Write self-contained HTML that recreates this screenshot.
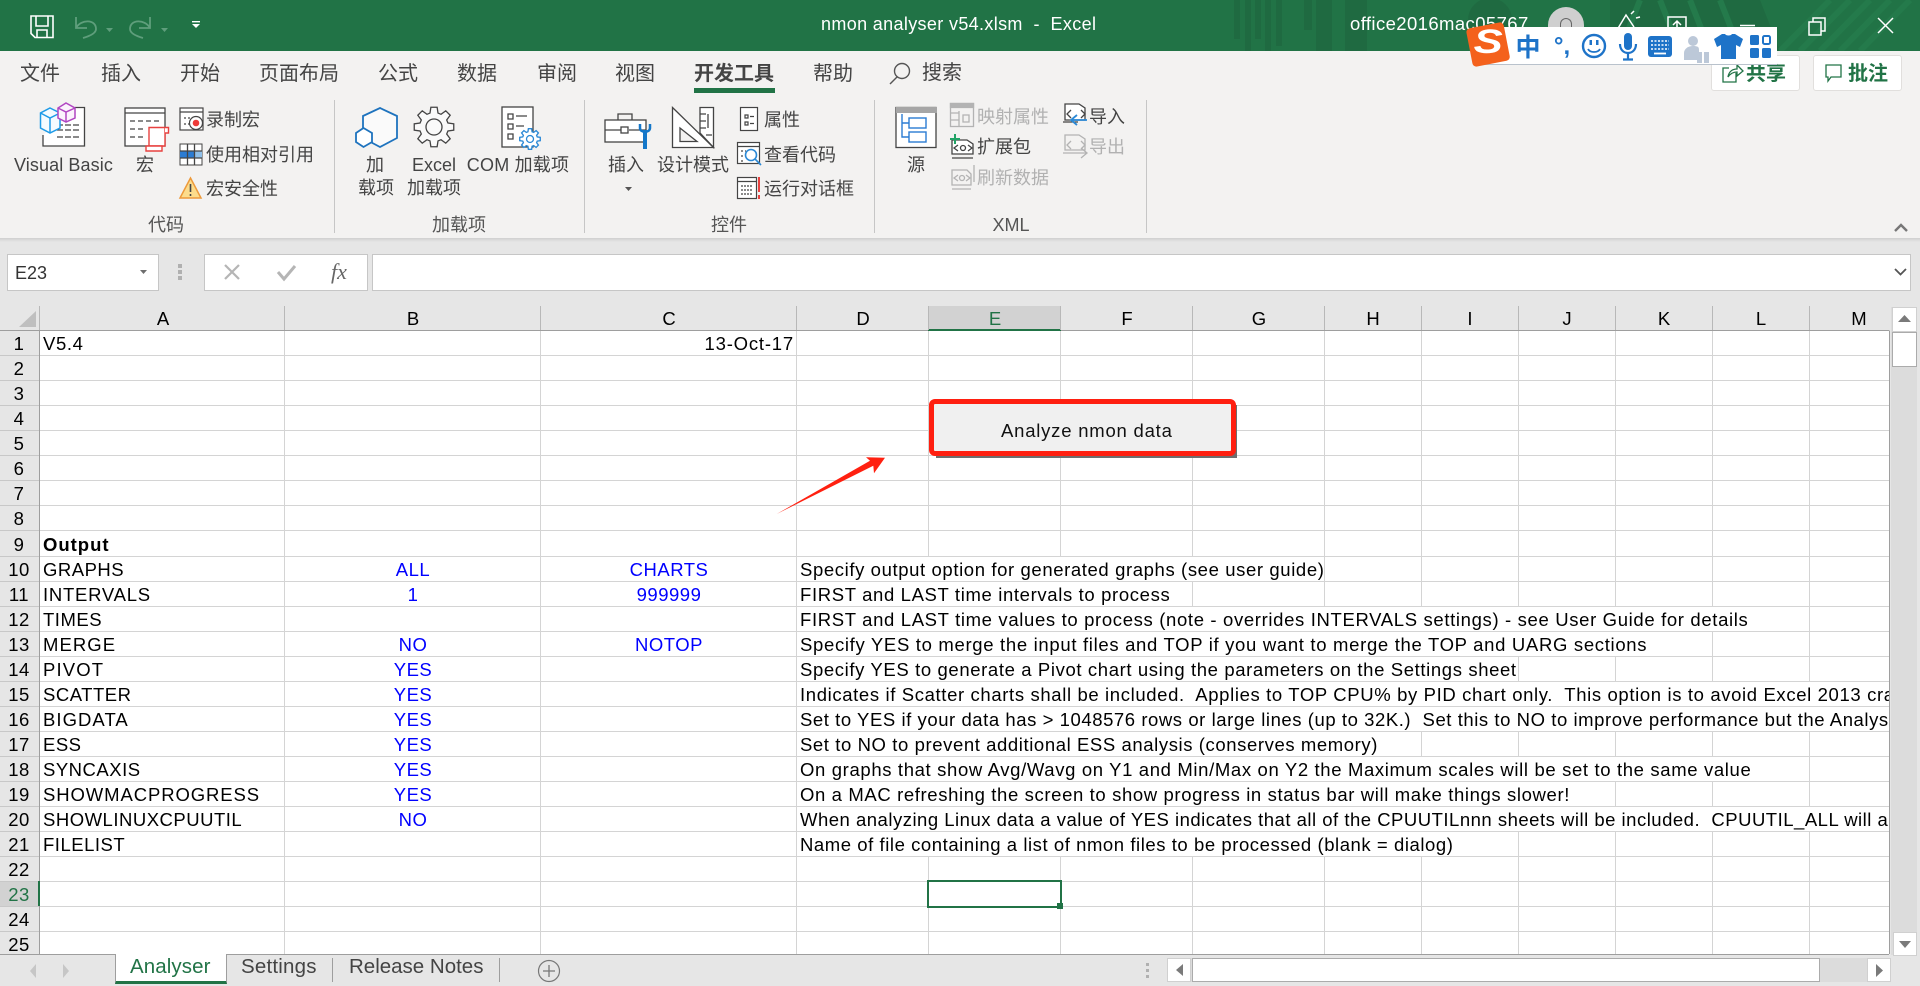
<!DOCTYPE html>
<html><head><meta charset="utf-8"><title>nmon analyser v54.xlsm - Excel</title>
<style>
html,body{margin:0;padding:0;width:1920px;height:986px;overflow:hidden;background:#e6e6e6}
body{position:relative;font-family:"Liberation Sans","Noto Sans CJK SC",sans-serif;font-size:18px;color:#444}
div{position:absolute;box-sizing:border-box}
.t{position:absolute;white-space:pre;line-height:24px}
.c{transform:translateX(-50%)}
.g{color:#b1b1b1}
.tab{font-size:20px;color:#444}
.grp{color:#555}
#cells{left:0;top:0;width:1889px;height:954px;overflow:hidden}
#cells .t{color:#000;letter-spacing:.5px;font-size:18.5px}
#cells .bl{color:#0000ff}
.rh{left:0;width:38px;text-align:center;color:#000}
.ch{color:#000;line-height:24px;top:307px;font-size:18.5px}
.w{background:#fff;left:797px;height:24px}
</style></head><body>

<!-- Backgrounds -->
<div style="left:0;top:0;width:1920px;height:51px;background:#217346"></div>
<div style="left:0;top:51px;width:1920px;height:187px;background:#f3f2f1"></div>
<div style="left:0;top:238px;width:1920px;height:4px;background:linear-gradient(#cfcfcf,#e6e6e6)"></div>

<!-- title-bar pattern -->
<svg style="position:absolute;left:0;top:0" width="1920" height="51">
<g fill="#1f6a41">
<rect x="1234" y="0" width="6" height="39"/><rect x="1245" y="0" width="6" height="51"/><rect x="1255" y="0" width="6" height="39"/><rect x="1265" y="0" width="6" height="51"/><rect x="1276" y="0" width="6" height="46"/>
<rect x="1304" y="0" width="8" height="30"/><rect x="1316" y="0" width="16" height="51"/><rect x="1345" y="0" width="22" height="51"/>
<circle cx="1490" cy="20" r="22"/>
<path d="M1610 0h150l20 51h-170z"/>
</g>
<g stroke="#247a4b" stroke-width="6" fill="none">
<path d="M1640 0l-20 51M1660 0l20 51M1690 0l20 51M1720 0l20 51"/>
<path d="M1830 0l-50 51M1850 0l-50 51M1870 0l-50 51M1890 0l-50 51M1910 0l-50 51"/>
</g>
</svg>

<!-- Title bar text -->
<span class="t" style="left:821px;top:12px;color:#fff;font-size:18px;letter-spacing:.35px">nmon analyser v54.xlsm  -  Excel</span>
<span class="t" style="left:1350px;top:12px;color:#fff;font-size:18.5px;letter-spacing:.4px">office2016mac05767</span>

<!-- Ribbon tabs -->
<span class="t tab" style="left:20px;top:62px">文件</span>
<span class="t tab" style="left:101px;top:62px">插入</span>
<span class="t tab" style="left:180px;top:62px">开始</span>
<span class="t tab" style="left:259px;top:62px">页面布局</span>
<span class="t tab" style="left:378px;top:62px">公式</span>
<span class="t tab" style="left:457px;top:62px">数据</span>
<span class="t tab" style="left:537px;top:62px">审阅</span>
<span class="t tab" style="left:615px;top:62px">视图</span>
<span class="t tab" style="left:694px;top:62px;font-weight:bold">开发工具</span>
<div style="left:694px;top:88px;width:81px;height:5px;background:#217346"></div>
<span class="t tab" style="left:813px;top:62px">帮助</span>
<span class="t tab" style="left:922px;top:61px">搜索</span>

<!-- Share / comment -->
<div style="left:1711px;top:55px;width:89px;height:36px;background:#fff;border:1px solid #e1dfdd;border-radius:3px"></div>
<div style="left:1813px;top:55px;width:89px;height:36px;background:#fff;border:1px solid #e1dfdd;border-radius:3px"></div>
<span class="t" style="left:1746px;top:62px;font-size:20px;font-weight:bold;color:#217346">共享</span>
<span class="t" style="left:1848px;top:62px;font-size:20px;font-weight:bold;color:#217346">批注</span>

<!-- Ribbon labels -->
<span class="t" style="left:14px;top:153px;letter-spacing:.1px">Visual Basic</span>
<span class="t c" style="left:145px;top:153px">宏</span>
<span class="t" style="left:206px;top:108px">录制宏</span>
<span class="t" style="left:206px;top:143px">使用相对引用</span>
<span class="t" style="left:206px;top:177px">宏安全性</span>
<span class="t c" style="left:375px;top:153px">加</span>
<span class="t c" style="left:376px;top:176px">载项</span>
<span class="t c" style="left:434px;top:153px">Excel</span>
<span class="t c" style="left:434px;top:176px">加载项</span>
<span class="t c" style="left:518px;top:153px;letter-spacing:.2px">COM 加载项</span>
<span class="t c" style="left:626px;top:153px">插入</span>
<span class="t" style="left:657px;top:153px">设计模式</span>
<span class="t" style="left:764px;top:108px">属性</span>
<span class="t" style="left:764px;top:143px">查看代码</span>
<span class="t" style="left:764px;top:177px">运行对话框</span>
<span class="t c" style="left:916px;top:153px">源</span>
<span class="t g" style="left:977px;top:105px">映射属性</span>
<span class="t" style="left:977px;top:135px">扩展包</span>
<span class="t g" style="left:977px;top:166px">刷新数据</span>
<span class="t" style="left:1089px;top:105px">导入</span>
<span class="t g" style="left:1089px;top:135px">导出</span>
<span class="t c grp" style="left:166px;top:213px">代码</span>
<span class="t c grp" style="left:459px;top:213px">加载项</span>
<span class="t c grp" style="left:729px;top:213px">控件</span>
<span class="t c grp" style="left:1011px;top:213px">XML</span>

<!-- Formula bar -->
<div style="left:7px;top:254px;width:152px;height:37px;background:#fff;border:1px solid #c6c6c6"></div>
<span class="t" style="left:15px;top:261px;color:#333">E23</span>
<div style="left:204px;top:254px;width:164px;height:37px;background:#fff;border:1px solid #c6c6c6"></div>
<div style="left:372px;top:254px;width:1539px;height:37px;background:#fff;border:1px solid #c6c6c6"></div>
<span class="t" style="left:331px;top:260px;font-family:'Liberation Serif',serif;font-style:italic;font-size:22px;color:#666">fx</span>

<!-- Column header -->
<div style="left:928px;top:306px;width:133px;height:24px;background:#d2d2d2"></div>
<div style="left:928px;top:329px;width:133px;height:2px;background:#217346"></div>

<!-- Sheet -->
<div style="left:40px;top:331px;width:1849px;height:623px;background:#fff"></div>
<div style="left:0;top:881px;width:39px;height:25px;background:#d2d2d2"></div>
<svg style="position:absolute;left:0;top:0" width="1920" height="986" shape-rendering="crispEdges">
<path fill="none" stroke="#d4d4d4" d="M40 355.5H1889M40 380.5H1889M40 405.5H1889M40 430.5H1889M40 455.5H1889M40 480.5H1889M40 505.5H1889M40 530.5H1889M40 556.5H1889M40 581.5H1889M40 606.5H1889M40 631.5H1889M40 656.5H1889M40 681.5H1889M40 706.5H1889M40 731.5H1889M40 756.5H1889M40 781.5H1889M40 806.5H1889M40 831.5H1889M40 856.5H1889M40 881.5H1889M40 906.5H1889M40 931.5H1889
M284.5 331V954M540.5 331V954M796.5 331V954M928.5 331V954M1060.5 331V954M1192.5 331V954M1324.5 331V954M1421.5 331V954M1518.5 331V954M1615.5 331V954M1712.5 331V954M1809.5 331V954"/>
<path fill="none" stroke="#c8c8c8" d="M0 355.5H39M0 380.5H39M0 405.5H39M0 430.5H39M0 455.5H39M0 480.5H39M0 505.5H39M0 530.5H39M0 556.5H39M0 581.5H39M0 606.5H39M0 631.5H39M0 656.5H39M0 681.5H39M0 706.5H39M0 731.5H39M0 756.5H39M0 781.5H39M0 806.5H39M0 831.5H39M0 856.5H39M0 881.5H39M0 906.5H39M0 931.5H39"/>
<path fill="none" stroke="#b8b8b8" d="M39.5 306V330M284.5 306V330M540.5 306V330M796.5 306V330M928.5 306V330M1060.5 306V330M1192.5 306V330M1324.5 306V330M1421.5 306V330M1518.5 306V330M1615.5 306V330M1712.5 306V330M1809.5 306V330"/>
<path fill="none" stroke="#9e9e9e" d="M0 330.5H928M1061 330.5H1889.5M39.5 331V954M1889.5 331V954M0 954.5H1889"/>
</svg>
<div style="left:38px;top:881px;width:2px;height:25px;background:#217346"></div>

<!-- Overflow covers -->
<div class="w" style="top:557px;width:527px"></div>
<div class="w" style="top:582px;width:395px"></div>
<div class="w" style="top:607px;width:1012px"></div>
<div class="w" style="top:632px;width:915px"></div>
<div class="w" style="top:657px;width:721px"></div>
<div class="w" style="top:682px;width:1092px"></div>
<div class="w" style="top:707px;width:1092px"></div>
<div class="w" style="top:732px;width:624px"></div>
<div class="w" style="top:757px;width:1012px"></div>
<div class="w" style="top:782px;width:818px"></div>
<div class="w" style="top:807px;width:1092px"></div>
<div class="w" style="top:832px;width:721px"></div>

<!-- Column letters -->
<span class="t c ch" style="left:163px">A</span>
<span class="t c ch" style="left:413px">B</span>
<span class="t c ch" style="left:669px">C</span>
<span class="t c ch" style="left:863px">D</span>
<span class="t c ch" style="left:995px;color:#217346">E</span>
<span class="t c ch" style="left:1127px">F</span>
<span class="t c ch" style="left:1259px">G</span>
<span class="t c ch" style="left:1373px">H</span>
<span class="t c ch" style="left:1470px">I</span>
<span class="t c ch" style="left:1567px">J</span>
<span class="t c ch" style="left:1664px">K</span>
<span class="t c ch" style="left:1761px">L</span>
<span class="t c ch" style="left:1859px">M</span>

<!-- Cells -->
<div id="cells">
<span class="t rh" style="top:332px">1</span>
<span class="t rh" style="top:357px">2</span>
<span class="t rh" style="top:382px">3</span>
<span class="t rh" style="top:407px">4</span>
<span class="t rh" style="top:432px">5</span>
<span class="t rh" style="top:457px">6</span>
<span class="t rh" style="top:482px">7</span>
<span class="t rh" style="top:507px">8</span>
<span class="t rh" style="top:533px">9</span>
<span class="t rh" style="top:558px">10</span>
<span class="t rh" style="top:583px">11</span>
<span class="t rh" style="top:608px">12</span>
<span class="t rh" style="top:633px">13</span>
<span class="t rh" style="top:658px">14</span>
<span class="t rh" style="top:683px">15</span>
<span class="t rh" style="top:708px">16</span>
<span class="t rh" style="top:733px">17</span>
<span class="t rh" style="top:758px">18</span>
<span class="t rh" style="top:783px">19</span>
<span class="t rh" style="top:808px">20</span>
<span class="t rh" style="top:833px">21</span>
<span class="t rh" style="top:858px">22</span>
<span class="t rh" style="top:883px"><span style="color:#217346">23</span></span>
<span class="t rh" style="top:908px">24</span>
<span class="t rh" style="top:933px">25</span>

<span class="t" style="left:43px;top:332px;letter-spacing:.6px">V5.4</span>
<span class="t" style="right:1095px;top:332px;letter-spacing:.8px">13-Oct-17</span>
<span class="t" style="left:43px;top:533px;font-weight:bold;letter-spacing:.98px">Output</span>
<span class="t" style="left:43px;top:558px">GRAPHS</span>
<span class="t" style="left:43px;top:583px;letter-spacing:.75px">INTERVALS</span>
<span class="t" style="left:43px;top:608px">TIMES</span>
<span class="t" style="left:43px;top:633px;letter-spacing:1.05px">MERGE</span>
<span class="t" style="left:43px;top:658px;letter-spacing:1.15px">PIVOT</span>
<span class="t" style="left:43px;top:683px">SCATTER</span>
<span class="t" style="left:43px;top:708px;letter-spacing:1.05px">BIGDATA</span>
<span class="t" style="left:43px;top:733px">ESS</span>
<span class="t" style="left:43px;top:758px">SYNCAXIS</span>
<span class="t" style="left:43px;top:783px;letter-spacing:.9px">SHOWMACPROGRESS</span>
<span class="t" style="left:43px;top:808px">SHOWLINUXCPUUTIL</span>
<span class="t" style="left:43px;top:833px">FILELIST</span>

<span class="t c bl" style="left:413px;top:558px">ALL</span>
<span class="t c bl" style="left:413px;top:583px">1</span>
<span class="t c bl" style="left:413px;top:633px">NO</span>
<span class="t c bl" style="left:413px;top:658px">YES</span>
<span class="t c bl" style="left:413px;top:683px">YES</span>
<span class="t c bl" style="left:413px;top:708px">YES</span>
<span class="t c bl" style="left:413px;top:733px">YES</span>
<span class="t c bl" style="left:413px;top:758px">YES</span>
<span class="t c bl" style="left:413px;top:783px">YES</span>
<span class="t c bl" style="left:413px;top:808px">NO</span>
<span class="t c bl" style="left:669px;top:558px">CHARTS</span>
<span class="t c bl" style="left:669px;top:583px">999999</span>
<span class="t c bl" style="left:669px;top:633px">NOTOP</span>

<span class="t" style="left:800px;top:558px;letter-spacing:.61px">Specify output option for generated graphs (see user guide)</span>
<span class="t" style="left:800px;top:583px;letter-spacing:.64px">FIRST and LAST time intervals to process</span>
<span class="t" style="left:800px;top:608px;letter-spacing:.65px">FIRST and LAST time values to process (note - overrides INTERVALS settings) - see User Guide for details</span>
<span class="t" style="left:800px;top:633px;letter-spacing:.68px">Specify YES to merge the input files and TOP if you want to merge the TOP and UARG sections</span>
<span class="t" style="left:800px;top:658px;letter-spacing:.62px">Specify YES to generate a Pivot chart using the parameters on the Settings sheet</span>
<span class="t" style="left:800px;top:683px;letter-spacing:.63px">Indicates if Scatter charts shall be included.  Applies to TOP CPU% by PID chart only.  This option is to avoid Excel 2013 crashes</span>
<span class="t" style="left:800px;top:708px;letter-spacing:.56px">Set to YES if your data has &gt; 1048576 rows or large lines (up to 32K.)  Set this to NO to improve performance but the Analyser will fail</span>
<span class="t" style="left:800px;top:733px;letter-spacing:.59px">Set to NO to prevent additional ESS analysis (conserves memory)</span>
<span class="t" style="left:800px;top:758px;letter-spacing:.64px">On graphs that show Avg/Wavg on Y1 and Min/Max on Y2 the Maximum scales will be set to the same value</span>
<span class="t" style="left:800px;top:783px;letter-spacing:.62px">On a MAC refreshing the screen to show progress in status bar will make things slower!</span>
<span class="t" style="left:800px;top:808px;letter-spacing:.5px">When analyzing Linux data a value of YES indicates that all of the CPUUTILnnn sheets will be included.  CPUUTIL_ALL will always be</span>
<span class="t" style="left:800px;top:833px;letter-spacing:.56px">Name of file containing a list of nmon files to be processed (blank = dialog)</span>
</div>

<!-- Selection -->
<div style="left:927px;top:880px;width:135px;height:28px;border:2px solid #217346"></div>
<div style="left:1057px;top:903px;width:6px;height:6px;background:#217346"></div>

<!-- Analyze button -->
<div style="left:936px;top:405px;width:301px;height:53px;background:#6e6e6e"></div>
<div style="left:929px;top:399px;width:307px;height:57px;background:#f0f0f0;border:5px solid #ff1f10;border-radius:6px"></div>
<span class="t" style="left:1001px;top:419px;color:#111;font-size:18.5px;letter-spacing:.78px">Analyze nmon data</span>

<!-- Scrollbars & tabs -->
<div style="left:1891px;top:307px;width:26px;height:648px;background:#dcdcdc"></div>
<div style="left:1892px;top:307px;width:25px;height:25px;background:#fff;border:1px solid #d0d0d0"></div>
<div style="left:1892px;top:332px;width:25px;height:35px;background:#fff;border:1px solid #ababab"></div>
<div style="left:1893px;top:932px;width:24px;height:24px;background:#fff;border:1px solid #d0d0d0"></div>
<div style="left:1191px;top:958px;width:700px;height:24px;background:#dcdcdc"></div>
<div style="left:1167px;top:958px;width:24px;height:24px;background:#fff;border:1px solid #d0d0d0"></div>
<div style="left:1192px;top:958px;width:628px;height:24px;background:#fff;border:1px solid #ababab"></div>
<div style="left:1867px;top:958px;width:24px;height:24px;background:#fff;border:1px solid #d0d0d0"></div>

<div style="left:115px;top:954px;width:112px;height:30px;background:#fff;border-left:1px solid #9e9e9e;border-right:1px solid #9e9e9e;border-bottom:3px solid #217346"></div>
<span class="t" style="left:130px;top:955px;font-size:20.5px;color:#217346;letter-spacing:.1px">Analyser</span>
<span class="t" style="left:241px;top:955px;font-size:20.5px;letter-spacing:.2px">Settings</span>
<span class="t" style="left:349px;top:955px;font-size:20.5px">Release Notes</span>
<div style="left:332px;top:958px;width:1px;height:24px;background:#9e9e9e"></div>
<div style="left:499px;top:958px;width:1px;height:24px;background:#9e9e9e"></div>

<!-- Icons -->
<svg style="position:absolute;left:0;top:0" width="1920" height="986" fill="none">
<defs><polygon id="gear" points="13.94,-4 19.75,-3.13 19.75,3.13 13.94,4 12.69,7.03 16.18,11.75 11.75,16.18 7.03,12.69 4,13.94 3.13,19.75 -3.13,19.75 -4,13.94 -7.03,12.69 -11.75,16.18 -16.18,11.75 -12.69,7.03 -13.94,4 -19.75,3.13 -19.75,-3.13 -13.94,-4 -12.69,-7.03 -16.18,-11.75 -11.75,-16.18 -7.03,-12.69 -4,-13.94 -3.13,-19.75 3.13,-19.75 4,-13.94 7.03,-12.69 11.75,-16.18 16.18,-11.75 12.69,-7.03"/></defs>

<!-- QAT -->
<g stroke="#fff" stroke-width="1.6">
<path d="M31 16H53V37.5H35L31 33.5Z"/><path d="M36 16V26H48V16M37 37.5V30H47V37.5"/>
</g>
<g stroke="#5f9e7c" stroke-width="1.8">
<path d="M76 17V28H87M76 28C81 19 96 19 96 29C96 33 90 36 83 38"/>
<path d="M150 17V28H139M150 28C145 19 130 19 130 29C130 33 136 36 143 38"/>
</g>
<path fill="#5f9e7c" d="M106 28h7l-3.5 4zM161 28h7l-3.5 4z"/>
<path fill="#fff" d="M192 21h8v1.4h-8zM192 24h8l-4 4z"/>

<!-- Window controls -->
<g stroke="#fff" stroke-width="1.5">
<path d="M1617 30L1626 15L1634 27M1631 14l3-3M1636 18l4-1"/>
<rect x="1668" y="17" width="18" height="14"/><path d="M1677 30V21M1673 25l4-4 4 4"/>
<path d="M1740 25.5h15"/>
<rect x="1809" y="22" width="12" height="13"/><path d="M1813 22V18H1825V31H1821"/>
<path d="M1878 18L1893 33M1893 18L1878 33"/>
</g>

<!-- search / share / comment -->
<g stroke="#555" stroke-width="1.4"><circle cx="902" cy="71" r="7.5"/><path d="M897 77L890 84"/></g>
<g stroke="#217346" stroke-width="1.3" transform="translate(0 -5)">
<path d="M1736 78v9h-13V73h6"/><path d="M1728 82c1-6 5-8 9-8v-4l6 6-6 5v-4c-4 0-7 2-9 5z"/>
</g>
<path stroke="#217346" stroke-width="1.3" d="M1826 65h15v12h-10l-3 4v-4h-2z"/>
<path d="M1895 231l6-6 6 6" stroke="#777" stroke-width="2.4"/>

<!-- separators -->
<path stroke="#c6c6c6" d="M334.5 100V233M584.5 100V233M874.5 100V233M1146.5 100V233"/>

<!-- VB icon -->
<g stroke="#444" stroke-width="1.3">
<path fill="#fff" d="M43 135V146H84.5V107.5H75"/><path stroke-dasharray="6 2" d="M57 125H80M57 130H80M57 137H80"/>
</g>
<g stroke="#1e9be8" stroke-width="1.5"><path fill="#f4fbff" d="M50 108L60 113V128L50 133L40.500 128V113Z"/><path d="M40.500 113L50 118L60 113M50 118V133"/></g>
<g stroke="#b146c2" stroke-width="1.5"><path fill="#fbf3fc" d="M66 103L75 108V118L66 122L58 118V108Z"/><path d="M58 108L66 112L75 108M66 112V122"/></g>

<!-- Macro -->
<g stroke="#444" stroke-width="1.3">
<rect x="125" y="108" width="40" height="38" fill="#fff"/><path d="M125 113H165"/><path stroke-dasharray="5 3" d="M130 121H160M130 129H146M130 137H146"/>
</g>
<g stroke="#e8413f" stroke-width="1.4" fill="#fff"><path d="M149 127.500H165V146H149Z"/><path d="M165 127.500H168.500V133H165"/><path d="M146 146H162V151H146Z"/></g>

<!-- Record -->
<g stroke="#444" stroke-width="1.2"><rect x="180" y="108" width="23" height="22" fill="#fff"/><path d="M180 112H203"/><path stroke-dasharray="2 2" d="M184 118H196M184 124H190"/><circle cx="196" cy="123" r="6.500" fill="#fff"/></g>
<circle cx="196" cy="123" r="3.300" fill="#ee3a38"/>

<!-- Relative grid -->
<rect x="180" y="144" width="22" height="21" fill="#fff" stroke="#444"/>
<rect x="180" y="151" width="7" height="7" fill="#2b7cd3"/><rect x="187" y="151" width="8" height="7" fill="#2b7cd3"/><rect x="195" y="151" width="7" height="7" fill="#8fbfe8"/>
<path stroke="#444" stroke-width="1.300" d="M187.500 144V165M194.500 144V165M180 151H202M180 158H202"/>

<!-- Warning -->
<path fill="#fcdc8c" stroke="#ed9a3b" stroke-width="1.500" d="M190.500 178L201 198H180Z"/>
<path stroke="#444" stroke-width="1.600" d="M190.500 184V192M190.500 194V196"/>

<!-- Add-ins hexagons -->
<g stroke="#1e73be" stroke-width="1.800" fill="#fafafa"><path d="M380 108L397 116V138L380 147L363 138V116Z"/><path fill="#fff" d="M363.500 128L372 133V142L363.500 147L356 142V133Z"/></g>

<!-- Gear -->
<g stroke="#444" stroke-width="1.300" fill="#fafafa"><use href="#gear" x="434" y="127"/><circle cx="434" cy="127" r="8"/></g>

<!-- COM -->
<g stroke="#444" stroke-width="1.300"><rect x="502" y="107" width="31" height="40" fill="#fff"/><path d="M508 114h5v5h-5zM508 124h5v5h-5zM508 134h5v5h-5zM516 116H527M516 126H524"/></g>
<g stroke="#2b89d6" stroke-width="2.600" fill="#fff"><use href="#gear" transform="translate(530 139) scale(.52)"/></g>
<circle cx="530" cy="139" r="3.500" stroke="#2b89d6" stroke-width="1.300" fill="#fff"/>

<!-- Toolbox -->
<g stroke="#444" stroke-width="1.300"><rect x="605" y="120" width="41" height="22" fill="#fff"/><path d="M618 120V114H632V120M605 130H621M629 130H646"/><rect x="621" y="127" width="7" height="6" fill="#fff"/></g>
<path stroke="#1477c9" stroke-width="4" d="M645 130V149"/><path stroke="#1477c9" stroke-width="2.500" d="M640 124V128C640 133 650 133 650 128V124"/>

<!-- Design -->
<g stroke="#444" stroke-width="1.300"><path fill="#fff" d="M700 107.500H713.500V147.500L700 133Z"/><path fill="#fff" d="M672.500 107.500L713.500 147.500H672.500Z"/><path fill="#f3f2f1" d="M680 128L697 141.500H680Z"/><path d="M700 114h6M700 121h6M700 128h6M706 135h6M708 114V128"/></g>

<!-- Props -->
<g stroke="#444" stroke-width="1.200"><rect x="740.500" y="107.500" width="17" height="23" fill="#fff"/><path d="M745 115h3v3h-3zM745 122h3v3h-3zM750 116.500H754M750 123.500H754"/></g>
<!-- View code -->
<g stroke="#444" stroke-width="1.200"><rect x="737.500" y="142.500" width="22" height="21" fill="#fff"/><path d="M737.500 146.500H759.500"/><path stroke-dasharray="2 2" d="M741 151H746M741 156H745M741 161H745"/></g>
<g stroke="#2b89d6" stroke-width="1.600"><circle cx="751" cy="155" r="5.500" fill="#fff"/><path d="M755 159L761 165"/></g>
<!-- Dialog -->
<g stroke="#444" stroke-width="1.200"><rect x="737.500" y="177.500" width="19" height="21" fill="#fff"/><path d="M737.500 181.500H756.500"/><path stroke-dasharray="2 1" d="M741 186H753M741 190H753M741 194H753"/></g>
<path stroke="#e8413f" stroke-width="2" d="M759 177V192M759 195V199"/>

<!-- Source -->
<rect x="896" y="107.500" width="40" height="40" fill="#fff" stroke="#444" stroke-width="1.300"/>
<rect x="896" y="107" width="41" height="6" fill="#a6a6a6"/>
<g stroke="#2b7cd3" stroke-width="1.400"><rect x="909" y="118" width="17" height="10"/><rect x="909" y="132" width="17" height="10"/><path d="M902 114V137H909M902 123H909"/></g>

<!-- Map props gray -->
<g stroke="#b3b3b3" stroke-width="1.300"><rect x="950.500" y="103.500" width="23" height="23" fill="#f3f2f1"/><path fill="#b3b3b3" d="M950.500 103.500h23v4h-23z"/><path d="M959 111V126.500M950.500 113H959M950.500 120H959M963 115h6v7h-6z"/></g>

<!-- Expansion -->
<g stroke="#444" stroke-width="1.300"><path fill="#fff" d="M952 154V140H967L973 144V154Z"/><path d="M952 158H973M958 145L954 148L958 151M968 145L972 148L968 151"/><circle cx="963" cy="148" r="2.500"/></g>
<path stroke="#21a366" stroke-width="2" d="M955 134V144M950 139H960"/>

<!-- Refresh gray -->
<g stroke="#b3b3b3" stroke-width="1.300"><path d="M952 185V170H967L971 174V185Z"/><path d="M952 189H971M958 175L954 178L958 181M966 175L970 178L966 181M974 165V182"/><circle cx="962" cy="178" r="2.500"/></g>

<!-- Import -->
<g stroke="#444" stroke-width="1.300"><path fill="#fff" d="M1065 120V104H1079L1085 108V120Z"/><path d="M1063 122H1078M1071 110L1067 114L1071 118M1081 110L1085 114L1081 118"/></g>
<path stroke="#2b89d6" stroke-width="1.800" d="M1087 120H1072M1077 115L1071 120L1077 125"/>
<!-- Export gray -->
<g stroke="#b3b3b3" stroke-width="1.300"><path d="M1065 150V135H1079L1085 139V150Z"/><path d="M1063 153H1078M1071 141L1067 145L1071 149M1081 141L1085 145L1081 149M1070 153H1086M1081 148L1087 153L1081 158"/></g>

<!-- caret / dropdown / formula bar -->
<path fill="#555" d="M625 187h7l-3.500 4z"/>
<path fill="#6e6e6e" d="M140 270h7l-3.500 4z"/>
<path stroke="#555" stroke-width="1.800" d="M1895 269l5.500 5.500 5.500-5.500"/>
<path fill="#b0b0b0" d="M178 264h4v4h-4zM178 270h4v4h-4zM178 276h4v4h-4z"/>
<g stroke="#b5b5b5" stroke-width="2.200"><path d="M225 265L239 279M239 265L225 279"/></g>
<path stroke="#b5b5b5" stroke-width="3" d="M278 272L284 279L295 266"/>

<!-- Corner triangle -->
<path fill="#bfbfbf" d="M36 311V327H19Z"/>

<!-- Arrow -->
<path fill="#ff2010" d="M776.700 514L870 460.700L866 457.300L885 457.700L874 473.300L873.300 465.700Z"/>

<!-- Scroll arrows -->
<path fill="#7a7a7a" d="M1898 322L1904.500 315L1911 322Z"/>
<path fill="#7a7a7a" d="M1899 941H1911L1905 948Z"/>
<path fill="#7a7a7a" d="M1183 964V976L1176 970Z"/>
<path fill="#7a7a7a" d="M1876 964V977L1883 970.500Z"/>
<path fill="#b0b0b0" d="M1146 963h3v3h-3zM1146 969h3v3h-3zM1146 975h3v3h-3z"/>
<path fill="#c6c6c6" d="M36 964V978L30 971ZM63 964V978L69 971Z"/>
<circle cx="549" cy="971" r="10.500" stroke="#777" stroke-width="1.200"/><path stroke="#777" stroke-width="1.300" d="M543 971H555M549 965V977"/>
</svg>

<!-- Sogou bar -->
<div style="left:1480px;top:27px;width:297px;height:38px;background:#fff;border-bottom:1px solid #b9c2cc"></div>
<svg style="position:absolute;left:1460px;top:18px" width="320" height="52" fill="none">
<g transform="rotate(-11 28 26)"><rect x="9" y="7" width="38" height="39" rx="4" fill="#f4611c"/></g>
<g fill="#1e73c8">
<text x="68" y="38" font-family="'Noto Sans CJK SC',sans-serif" font-size="25" font-weight="bold" text-anchor="middle">中</text>
<text x="102" y="36" font-family="'Liberation Sans',sans-serif" font-size="24" font-weight="bold" text-anchor="middle">°,</text>
</g>
<text x="28" y="39" font-family="'Liberation Sans',sans-serif" font-size="38" font-weight="bold" font-style="italic" fill="#fff" text-anchor="middle" transform="translate(-4 0) scale(1.15 .9)">S</text>
<!-- smiley -->
<g stroke="#1e73c8" stroke-width="2.400"><circle cx="134" cy="28" r="11" fill="#fff"/><path stroke-width="1.800" d="M128 31c2 4 10 4 12 0"/></g>
<path fill="#1e73c8" d="M129.500 22h2.500v5h-2.500zM136 22h2.500v5H136z"/>
<!-- mic -->
<rect x="164" y="15" width="8" height="17" rx="4" fill="#1e73c8"/>
<path stroke="#1e73c8" stroke-width="2.200" d="M160 26c0 12 16 12 16 0M168 35V41M163 41.500H173"/>
<!-- keyboard -->
<rect x="188" y="18" width="24" height="21" rx="3" fill="#1e73c8"/>
<path stroke="#fff" stroke-width="1.600" stroke-dasharray="2 1.500" d="M191 23H209M191 27H209M191 31H209"/>
<path stroke="#fff" stroke-width="1.800" d="M194 35.500H206"/>
<!-- person -->
<circle cx="233" cy="23" r="5" fill="#bcc8d8"/><path fill="#bcc8d8" d="M224 42V35c0-4 4-7 9-7s6 1 6 4v10z"/>
<rect x="237" y="34" width="5" height="11" fill="#bcc8d8"/><rect x="244" y="34" width="5" height="11" fill="#bcc8d8"/>
<!-- shirt -->
<path fill="#1e73c8" d="M259 22l8-5h3c1 2 6 2 7 0h3l8 5-3 8-4-2v14h-15V28l-4 2z" transform="translate(-5 -1)"/>
<!-- apps -->
<g fill="#1e73c8"><rect x="290" y="17" width="9" height="10" rx="1.500"/><rect x="290" y="30" width="9" height="10" rx="1.500"/><rect x="302" y="30" width="9" height="10" rx="1.500"/><rect x="303" y="18" width="7" height="8" rx="1.500" fill="#fff" stroke="#1e73c8" stroke-width="2"/></g>
</svg>
<!-- avatar -->
<div style="left:1548px;top:7px;width:36px;height:20px;background:#cfcfcf;border-radius:18px 18px 0 0"></div>
<div style="left:1560px;top:18px;width:12px;height:9px;border:1.500px solid #666;border-bottom:0;border-radius:6px 6px 0 0"></div>
</body></html>
